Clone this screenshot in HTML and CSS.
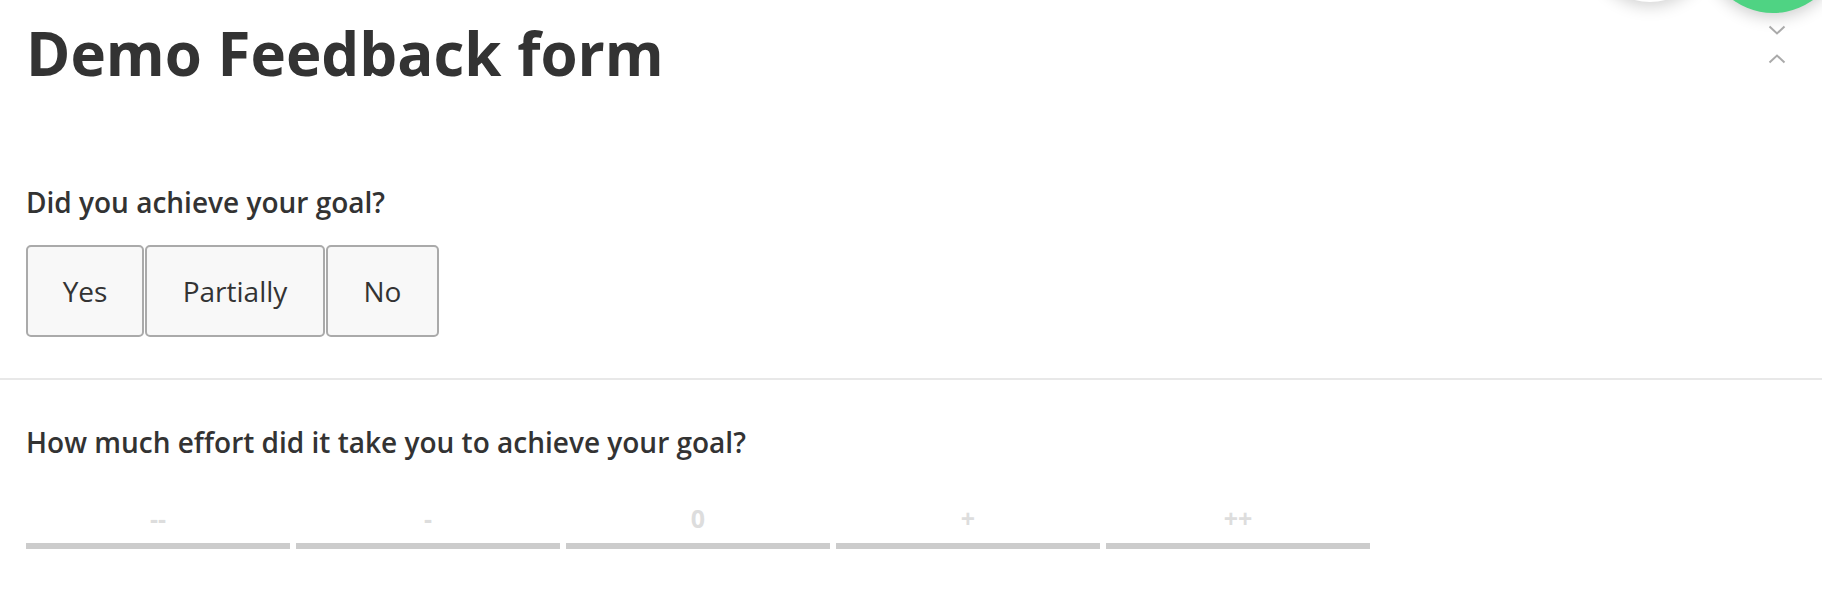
FILE: index.html
```html
<!DOCTYPE html>
<html>
<head>
<meta charset="utf-8">
<link rel="stylesheet" href="styles.css">
</head>
<body>
<div class="fab-white"></div>
<div class="fab-green"></div>
<div class="nav-arrows">
  <svg class="chev" width="18" height="10" viewBox="0 0 18 10"><path d="M1.5 1.5 L9 8.5 L16.5 1.5" fill="none" stroke="#aaaaaa" stroke-width="2"/></svg>
  <svg class="chev" width="18" height="10" viewBox="0 0 18 10"><path d="M1.5 8.5 L9 1.5 L16.5 8.5" fill="none" stroke="#aaaaaa" stroke-width="2"/></svg>
</div>
<main class="page">
  <h1 class="title">Demo Feedback form</h1>
  <section class="question first">
    <h2 class="label">Did you achieve your goal?</h2>
    <div class="choices">
      <button class="choice yes">Yes</button>
      <button class="choice partial">Partially</button>
      <button class="choice no">No</button>
    </div>
  </section>
  <hr class="divider">
  <section class="question second">
    <h2 class="label">How much effort did it take you to achieve your goal?</h2>
    <div class="scale">
      <div class="step"><span class="step-label">--</span><span class="bar"></span></div>
      <div class="step"><span class="step-label">-</span><span class="bar"></span></div>
      <div class="step"><span class="step-label">0</span><span class="bar"></span></div>
      <div class="step"><span class="step-label">+</span><span class="bar"></span></div>
      <div class="step"><span class="step-label">++</span><span class="bar"></span></div>
    </div>
  </section>
</main>
</body>
</html>
```

FILE: styles.css
```css
html, body {
  margin: 0;
  padding: 0;
  background: #ffffff;
  overflow: hidden;
  height: 592px;
}
body {
  font-family: "Open Sans", "Liberation Sans", sans-serif;
  color: #333333;
  position: relative;
}
.page {
  padding: 0;
}
.title {
  margin: 0;
  padding: 13px 0 0 26px;
  font-size: 60px;
  font-weight: 700;
  line-height: 80px;
  color: #333333;
}
.question {
  padding: 0 26px;
}
.question.first {
  padding-top: 92px;
}
.label {
  margin: 0;
  font-size: 28px;
  font-weight: 600;
  line-height: 34px;
  color: #333333;
}
.choices {
  display: flex;
  gap: 1px;
  margin-top: 26px;
}
.choice {
  height: 92px;
  border: 2px solid #aaaaaa;
  border-radius: 5px;
  background: #f8f8f8;
  font-family: "Open Sans", "Liberation Sans", sans-serif;
  font-size: 28px;
  color: #333333;
  padding: 0;
  box-sizing: border-box;
}
.choice.yes { width: 118px; }
.choice.partial { width: 180px; }
.choice.no { width: 113px; }
.divider {
  margin: 41px 0 0 0;
  border: 0;
  height: 2px;
  background: #e8e8e8;
}
.question.second {
  padding-top: 45px;
}
.scale {
  display: flex;
  gap: 6px;
  margin-top: 43px;
}
.step {
  width: 264px;
  display: flex;
  flex-direction: column;
  align-items: center;
}
.step-label {
  font-family: "Open Sans", Roboto, sans-serif;
  font-size: 25px;
  font-weight: 700;
  color: #dddddd;
  line-height: 32px;
}
.bar {
  display: block;
  width: 100%;
  height: 6px;
  background: #cccccc;
  margin-top: 9px;
}
.fab-white {
  position: absolute;
  left: 1590px;
  top: -118px;
  width: 120px;
  height: 120px;
  border-radius: 50%;
  background: #ffffff;
  box-shadow: 0 4px 16px rgba(0,0,0,0.18);
}
.fab-green {
  position: absolute;
  left: 1705px;
  top: -123px;
  width: 136px;
  height: 136px;
  border-radius: 50%;
  background: #4fd383;
  box-shadow: 0 4px 16px rgba(0,0,0,0.2);
}
.nav-arrows {
  position: absolute;
  left: 1768px;
  top: 25px;
  display: flex;
  flex-direction: column;
  gap: 19px;
}
.chev {
  display: block;
}
```
